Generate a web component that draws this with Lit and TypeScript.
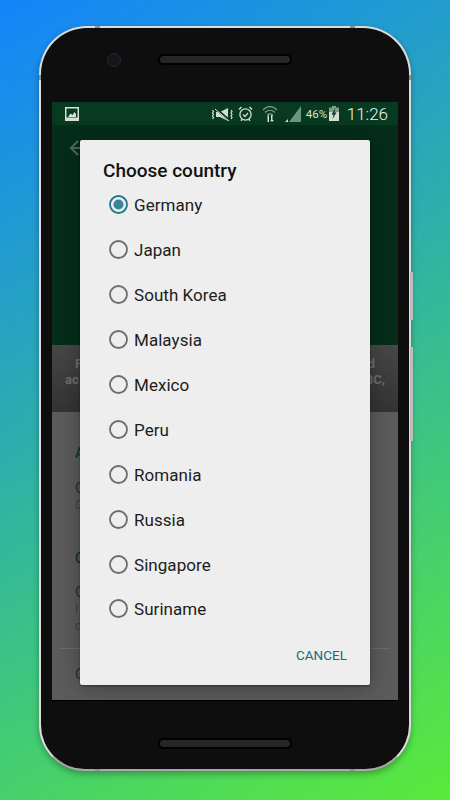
import { LitElement, html, css, svg } from "lit";
import { customElement } from "lit/decorators.js";

const countries = ["Germany", "Japan", "South Korea", "Malaysia", "Mexico", "Peru", "Romania", "Russia", "Singapore", "Suriname"];

@customElement("app-root")
export class AppRoot extends LitElement {
  static styles = css`
    :host { display: block; width: 450px; height: 800px; overflow: hidden; font-family: Roboto, "Liberation Sans", sans-serif;
      background: linear-gradient(150deg, #1484fb 0%, #2fb0a8 45%, #5aea3a 100%); }
    .phone { box-sizing: border-box; position: relative; width: 372px; height: 745px; margin: 0 auto; top: 26px; border-radius: 48px 48px 46px 46px;
      background: #0e0e0e; border: 2px solid #dcdcdc; border-bottom-color: #a8a8a8; box-shadow: 0 3px 6px rgba(0,0,0,.3);
      padding: 74px 11px 69px; display: flex; flex-direction: column; }
    .side { position: absolute; right: -4px; width: 3px; background: #bdbdbd; }
    .side.a { top: 244px; height: 48px; }
    .side.b { top: 319px; height: 94px; }
    .mark { position: absolute; background: #8f8f8f; }
    .mark.top { top: -2px; width: 5px; height: 2px; }
    .mark.bot { bottom: -2px; width: 5px; height: 2px; }
    .mark.left { left: -2px; width: 2px; height: 5px; top: 47px; }
    .mark.right { right: -2px; width: 2px; height: 5px; top: 47px; }
    .mark.m1 { left: 54px; }
    .mark.m2 { right: 54px; }
    .camera { position: absolute; left: 66px; top: 25px; width: 12px; height: 12px; border-radius: 50%; background: #15151c; border: 1px solid #26262b; }
    .speaker { position: absolute; left: 117px; width: 134px; height: 11px; box-sizing: border-box; border-radius: 6px; background: #262626; border: 2px solid #000; }
    .speaker.top { top: 26px; }
    .speaker.bottom { bottom: 20px; }
    .screen { position: relative; flex: 1; display: flex; flex-direction: column; overflow: hidden; background: #5b5b5b; box-shadow: 0 1px 0 #000; }
    .status { height: 23px; flex: none; background: #073a20; display: flex; align-items: center; color: #dbe3dd; padding: 0 10px 0 13px; }
    .status svg { display: block; flex: none; }
    .spacer { flex: 1; }
    .mute { margin-top: 1px; }
    .alarm { margin-left: 5px; }
    .wifi { margin-left: 9px; }
    .signal { margin-left: 7px; }
    .battery { margin-left: 2px; }
    .pct { font-size: 11.5px; margin-left: 5px; width: 21px; white-space: nowrap; }
    .clock { font-size: 17px; font-weight: 300; margin-left: 8px; color: #eef3ef; }
    .header { height: 220px; flex: none; background: #052d1a; padding: 14px 17px; box-sizing: border-box; }
    .band { height: 67px; flex: none; background: linear-gradient(#474747, #333); color: #6e6e6e; font-size: 13px; font-weight: 700; line-height: 16px; padding: 11px 0 0; box-sizing: border-box; }
    .band div { display: flex; justify-content: space-between; }
    .band .l1 { padding: 0 23px; }
    .band .l2 { padding: 0 13px; }
    .body { flex: 1; padding: 0 23px; color: #2a2a2a; font-size: 15px; }
    .sec { color: #0a3a1f; font-size: 14px; font-weight: 500; margin-top: 33px; }
    .t { font-size: 15px; margin-top: 18px; line-height: 18px; }
    .s { font-size: 12px; color: #3e3e3e; line-height: 17px; }
    .sec.two { margin-top: 36px; }
    .t.tight { margin-top: 17px; }
    .rule { height: 1px; background: #6b6b6b; margin: 13px -15px 0; }
    .last { margin-top: 16px; }
    .dialog { position: absolute; left: 28px; top: 38px; width: 290px; height: 545px; box-sizing: border-box; background: #eee; border-radius: 2px;
      box-shadow: 0 1px 2px rgba(0,0,0,.4), 0 2px 22px rgba(0,0,0,.3); padding: 20px 23px 0; display: flex; flex-direction: column; }
    h1 { margin: 0; font-size: 19px; font-weight: 500; color: #111; line-height: 22px; }
    .list { display: flex; flex-direction: column; margin-top: 1px; padding-left: 6px; }
    .row { height: 44.9px; display: flex; align-items: center; gap: 6px; font-size: 17px; color: #1c1c1c; letter-spacing: .05px; }
    .row svg { flex: none; margin-top: -1px; }
    .actions { display: flex; justify-content: flex-end; margin-top: 15px; color: #176b80; font-size: 13.5px; font-weight: 400; }
  `;

  radio(on: boolean) {
    const c = on ? "#1a7a8c" : "#6d6d6d";
    return html`<svg width="19" height="19" viewBox="0 0 19 19">
      <circle cx="9.5" cy="9.5" r="8.5" fill="none" stroke=${c} stroke-width="1.800"></circle>
      ${on ? svg`<circle cx="9.5" cy="9.5" r="5" fill="#3b8496"></circle>` : ""}
    </svg>`;
  }

  render() {
    return html`
      <div class="phone">
        <div class="side a"></div><div class="side b"></div>
        <div class="mark top m1"></div><div class="mark top m2"></div>
        <div class="mark bot m1"></div><div class="mark bot m2"></div>
        <div class="mark left"></div><div class="mark right"></div>
        <div class="camera"></div>
        <div class="speaker top"></div>
        <div class="screen">
          <div class="status">
            <svg width="14" height="14" viewBox="0 0 14 14">
              <path fill="#d4ddd6" d="M0 0h14v14H0z"></path>
              <path fill="#073a20" d="M1.500 1.500h11v9h-11z"></path>
              <path fill="#d4ddd6" d="M3 10l2.500-3.500 2 1.500 2-3 1.500 2v3z"></path>
            </svg>
            <div class="spacer"></div>
            <svg class="mute" width="22" height="13" viewBox="0 0 22 13">
              <path fill="#d4ddd6" d="M5 4h4l8-4v13l-8-4H5z"></path>
              <path stroke="#073a20" stroke-width="2.400" d="M4 0l14 12"></path>
              <path stroke="#d4ddd6" stroke-width="1" d="M4 1l14 12"></path>
              <path fill="none" stroke="#d4ddd6" stroke-width="1.200" d="M1.500 2l1 1.500-1 1.500 1 1.500-1 1.500 1 1.500-1 1.500M20 2l1 1.500-1 1.500 1 1.500-1 1.500 1 1.500-1 1.500"></path>
            </svg>
            <svg class="alarm" width="15" height="16" viewBox="0 0 15 16">
              <circle cx="7.500" cy="8.500" r="5.600" fill="none" stroke="#d4ddd6" stroke-width="1.300"></circle>
              <path fill="none" stroke="#d4ddd6" stroke-width="1.200" d="M5 8.500l2 2 3-3.500"></path>
              <path fill="none" stroke="#d4ddd6" stroke-width="1.500" d="M1 3.500L3.500 1M14 3.500L11.500 1M3 14.800l1-1.300M12 14.800l-1-1.300"></path>
            </svg>
            <svg class="wifi" width="16" height="17" viewBox="0 0 16 17">
              <path fill="none" stroke="#7f9c8a" stroke-width="1.200" d="M1 5c4-4.500 10-4.500 14 0M3 7.500c3-3 7-3 10 0M5 10c2-1.500 4-1.500 6 0"></path>
              <path fill="#d4ddd6" d="M5 12l2-2.500V17H5.500v-5zM9 10v5H8l2 2 2-2h-1.500v-5z"></path>
            </svg>
            <svg class="signal" width="16" height="16" viewBox="0 0 16 16">
              <path fill="#6f9480" d="M16 0v16H4z"></path>
              <path fill="#d4ddd6" d="M0 16l3-3v3z"></path>
            </svg>
            <span class="pct">46%</span>
            <svg class="battery" width="10" height="15" viewBox="0 0 10 15">
              <path fill="#7f9c8a" d="M3 0h4v1.500h3V6H0V1.500h3z"></path>
              <path fill="#d4ddd6" d="M0 6h10v9H0z"></path>
              <path fill="#073a20" d="M6.500 2L2.500 8.500h2L3.500 13l4-6.500h-2z"></path>
            </svg>
            <span class="clock">11:26</span>
          </div>
          <div class="header">
            <svg width="18" height="18" viewBox="0 0 18 18"><path fill="none" stroke="#4b6a59" stroke-width="2.200" d="M17 9H3M9 2L2 9l7 7"></path></svg>
          </div>
          <div class="band">
            <div class="l1"><span>F</span><span>d</span></div>
            <div class="l2"><span>ac</span><span>BC,</span></div>
          </div>
          <div class="body">
            <div class="sec">A</div>
            <div class="t">C</div>
            <div class="s">C</div>
            <div class="sec two">C</div>
            <div class="t tight">C</div>
            <div class="s">I</div>
            <div class="s">c</div>
            <div class="rule"></div>
            <div class="t last">C</div>
          </div>
          <div class="dialog">
            <h1>Choose country</h1>
            <div class="list">
              ${countries.map((c, i) => html`<div class="row">${this.radio(i === 0)}<span>${c}</span></div>`)}
            </div>
            <div class="actions"><span>CANCEL</span></div>
          </div>
        </div>
        <div class="speaker bottom"></div>
      </div>
    `;
  }
}
